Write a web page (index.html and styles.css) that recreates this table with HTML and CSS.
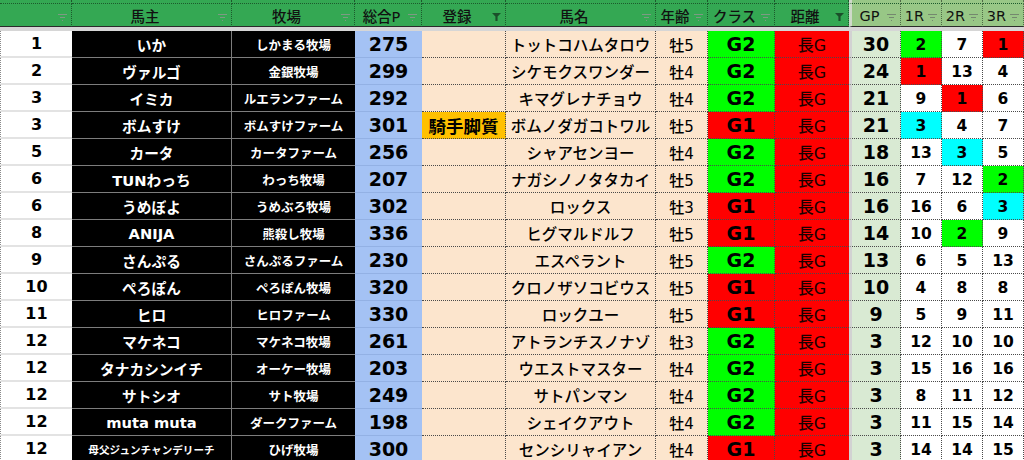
FILE: index.html
```html
<!DOCTYPE html>
<html lang="ja">
<head>
<meta charset="utf-8">
<title>順位表</title>
<link rel="stylesheet" href="styles.css">
</head>
<body>
<div class="sheet">
  <div class="row top">
    <div class="h"></div><div class="h"></div><div class="h"></div><div class="h"></div><div class="h"></div><div class="h"></div><div class="h"></div><div class="h"></div><div class="h"></div>
    <div class="h rt gpc"></div><div class="h rt"></div><div class="h rt"></div><div class="h rt"></div>
  </div>
  <div class="row head">
    <div class="h"><span class="ht"></span><span class="fi"></span></div>
    <div class="h"><span class="ht">馬主</span><span class="fi"></span></div>
    <div class="h"><span class="ht">牧場</span><span class="fi"></span></div>
    <div class="h"><span class="ht">総合P</span><span class="fi"></span></div>
    <div class="h"><span class="ht">登録</span><span class="fa"></span></div>
    <div class="h"><span class="ht">馬名</span><span class="fi"></span></div>
    <div class="h"><span class="ht">年齢</span><span class="fi"></span></div>
    <div class="h"><span class="ht">クラス</span><span class="fi"></span></div>
    <div class="h"><span class="ht">距離</span><span class="fa"></span></div>
    <div class="h rt gpc"><span class="ht">GP</span><span class="fi"></span></div>
    <div class="h rt"><span class="ht">1R</span><span class="fi"></span></div>
    <div class="h rt"><span class="ht">2R</span><span class="fi"></span></div>
    <div class="h rt"><span class="ht">3R</span><span class="fi"></span></div>
  </div>
  <div class="band"></div>

  <div class="row"><div class="c rank">1</div><div class="c own">いか</div><div class="c farm">しかまる牧場</div><div class="c pts">275</div><div class="c reg"></div><div class="c horse">トットコハムタロウ</div><div class="c age">牡5</div><div class="c cls g2">G2</div><div class="c dist">長G</div><div class="c gp">30</div><div class="c r gr">2</div><div class="c r">7</div><div class="c r rd">1</div></div>
  <div class="row"><div class="c rank">2</div><div class="c own">ヴァルゴ</div><div class="c farm">金銀牧場</div><div class="c pts">299</div><div class="c reg"></div><div class="c horse">シケモクスワンダー</div><div class="c age">牡4</div><div class="c cls g2">G2</div><div class="c dist">長G</div><div class="c gp">24</div><div class="c r rd">1</div><div class="c r">13</div><div class="c r">4</div></div>
  <div class="row"><div class="c rank">3</div><div class="c own">イミカ</div><div class="c farm">ルエランファーム</div><div class="c pts">292</div><div class="c reg"></div><div class="c horse">キマグレナチョウ</div><div class="c age">牡4</div><div class="c cls g2">G2</div><div class="c dist">長G</div><div class="c gp">21</div><div class="c r">9</div><div class="c r rd">1</div><div class="c r">6</div></div>
  <div class="row"><div class="c rank">3</div><div class="c own">ボムすけ</div><div class="c farm">ボムすけファーム</div><div class="c pts">301</div><div class="c reg jk">騎手脚質</div><div class="c horse">ボムノダガコトワル</div><div class="c age">牡5</div><div class="c cls g1">G1</div><div class="c dist">長G</div><div class="c gp">21</div><div class="c r cy">3</div><div class="c r">4</div><div class="c r">7</div></div>
  <div class="row"><div class="c rank">5</div><div class="c own">カータ</div><div class="c farm">カータファーム</div><div class="c pts">256</div><div class="c reg"></div><div class="c horse">シャアセンヨー</div><div class="c age">牡4</div><div class="c cls g2">G2</div><div class="c dist">長G</div><div class="c gp">18</div><div class="c r">13</div><div class="c r cy">3</div><div class="c r">5</div></div>
  <div class="row"><div class="c rank">6</div><div class="c own">TUNわっち</div><div class="c farm">わっち牧場</div><div class="c pts">207</div><div class="c reg"></div><div class="c horse">ナガシノノタタカイ</div><div class="c age">牡5</div><div class="c cls g2">G2</div><div class="c dist">長G</div><div class="c gp">16</div><div class="c r">7</div><div class="c r">12</div><div class="c r gr">2</div></div>
  <div class="row"><div class="c rank">6</div><div class="c own">うめぼよ</div><div class="c farm">うめぶろ牧場</div><div class="c pts">302</div><div class="c reg"></div><div class="c horse">ロックス</div><div class="c age">牡3</div><div class="c cls g1">G1</div><div class="c dist">長G</div><div class="c gp">16</div><div class="c r">16</div><div class="c r">6</div><div class="c r cy">3</div></div>
  <div class="row"><div class="c rank">8</div><div class="c own">ANIJA</div><div class="c farm">熊殺し牧場</div><div class="c pts">336</div><div class="c reg"></div><div class="c horse">ヒグマルドルフ</div><div class="c age">牡5</div><div class="c cls g1">G1</div><div class="c dist">長G</div><div class="c gp">14</div><div class="c r">10</div><div class="c r gr">2</div><div class="c r">9</div></div>
  <div class="row"><div class="c rank">9</div><div class="c own">さんぷる</div><div class="c farm">さんぷるファーム</div><div class="c pts">230</div><div class="c reg"></div><div class="c horse">エスペラント</div><div class="c age">牡5</div><div class="c cls g2">G2</div><div class="c dist">長G</div><div class="c gp">13</div><div class="c r">6</div><div class="c r">5</div><div class="c r">13</div></div>
  <div class="row"><div class="c rank">10</div><div class="c own">ぺろぽん</div><div class="c farm">ぺろぽん牧場</div><div class="c pts">320</div><div class="c reg"></div><div class="c horse">クロノザソコビウス</div><div class="c age">牡5</div><div class="c cls g1">G1</div><div class="c dist">長G</div><div class="c gp">10</div><div class="c r">4</div><div class="c r">8</div><div class="c r">8</div></div>
  <div class="row"><div class="c rank">11</div><div class="c own">ヒロ</div><div class="c farm">ヒロファーム</div><div class="c pts">330</div><div class="c reg"></div><div class="c horse">ロックユー</div><div class="c age">牡5</div><div class="c cls g1">G1</div><div class="c dist">長G</div><div class="c gp">9</div><div class="c r">5</div><div class="c r">9</div><div class="c r">11</div></div>
  <div class="row"><div class="c rank">12</div><div class="c own">マケネコ</div><div class="c farm">マケネコ牧場</div><div class="c pts">261</div><div class="c reg"></div><div class="c horse">アトランチスノナゾ</div><div class="c age">牡3</div><div class="c cls g2">G2</div><div class="c dist">長G</div><div class="c gp">3</div><div class="c r">12</div><div class="c r">10</div><div class="c r">10</div></div>
  <div class="row"><div class="c rank">12</div><div class="c own">タナカシンイチ</div><div class="c farm">オーケー牧場</div><div class="c pts">203</div><div class="c reg"></div><div class="c horse">ウエストマスター</div><div class="c age">牡4</div><div class="c cls g2">G2</div><div class="c dist">長G</div><div class="c gp">3</div><div class="c r">15</div><div class="c r">16</div><div class="c r">16</div></div>
  <div class="row"><div class="c rank">12</div><div class="c own">サトシオ</div><div class="c farm">サト牧場</div><div class="c pts">249</div><div class="c reg"></div><div class="c horse">サトパンマン</div><div class="c age">牡4</div><div class="c cls g2">G2</div><div class="c dist">長G</div><div class="c gp">3</div><div class="c r">8</div><div class="c r">11</div><div class="c r">12</div></div>
  <div class="row"><div class="c rank">12</div><div class="c own">muta muta</div><div class="c farm">ダークファーム</div><div class="c pts">198</div><div class="c reg"></div><div class="c horse">シェイクアウト</div><div class="c age">牡4</div><div class="c cls g2">G2</div><div class="c dist">長G</div><div class="c gp">3</div><div class="c r">11</div><div class="c r">15</div><div class="c r">14</div></div>
  <div class="row"><div class="c rank">12</div><div class="c own small">母父ジュンチャンデリーチ</div><div class="c farm">ひげ牧場</div><div class="c pts">300</div><div class="c reg"></div><div class="c horse">センシリャイアン</div><div class="c age">牡4</div><div class="c cls g1">G1</div><div class="c dist">長G</div><div class="c gp">3</div><div class="c r">14</div><div class="c r">14</div><div class="c r">15</div></div>
</div>
</body>
</html>
```

FILE: styles.css
```css
html, body {
  margin: 0;
  padding: 0;
  background: #ffffff;
}

body {
  width: 1024px;
  height: 460px;
  overflow: hidden;
}

.sheet {
  font-family: "DejaVu Sans", "Noto Sans CJK JP", sans-serif;
  color: #000;
  width: 1024px;
}

.row {
  display: grid;
  grid-template-columns: 72px 160px 123px 67px 84px 150px 52px 67px 74px 52px 41px 41px 41px;
  height: 27px;
}

.row.top {
  height: 4px;
}

.row.head {
  height: 23px;
}

/* header cells */
.h {
  box-sizing: border-box;
  background: #34a853;
  border-right: 1px dotted #1c5a2c;
  border-bottom: 1px dotted #1c5a2c;
  display: flex;
  align-items: center;
  min-width: 0;
}

.head .h {
  border-bottom: 1px solid #2b2b2b;
}

.h.rt {
  background: #98c786;
  border-right-color: #4f6b46;
}

.h.gpc {
  border-left: 3px solid #cfd9ca;
}

.ht {
  flex: 1;
  text-align: center;
  font-size: 14.5px;
  font-weight: 500;
  color: #111;
  white-space: nowrap;
  padding-top: 1px;
}

/* inactive filter icon */
.fi {
  flex: none;
  width: 9px;
  height: 7px;
  margin: 4px 4px 0 0;
  background:
    linear-gradient(#7d9a83, #7d9a83) center top / 9px 1px no-repeat,
    linear-gradient(#7d9a83, #7d9a83) center 3px / 5px 1px no-repeat,
    linear-gradient(#7d9a83, #7d9a83) center 6px / 1px 1px no-repeat;
}

.rt .fi {
  background:
    linear-gradient(#74886e, #74886e) center top / 9px 1px no-repeat,
    linear-gradient(#74886e, #74886e) center 3px / 5px 1px no-repeat,
    linear-gradient(#74886e, #74886e) center 6px / 1px 1px no-repeat;
}

/* active filter icon */
.fa {
  flex: none;
  width: 9px;
  height: 8px;
  margin: 4px 4px 0 0;
  background: #1b4f2a;
  clip-path: polygon(0 0, 100% 0, 62% 45%, 62% 100%, 38% 100%, 38% 45%);
}

.band {
  height: 4px;
  background: #d6d6d6;
}

/* body cells */
.c {
  box-sizing: border-box;
  display: flex;
  align-items: center;
  justify-content: center;
  white-space: nowrap;
  overflow: hidden;
  border-right: 1px dotted #4a4a4a;
  border-bottom: 1px dotted #4a4a4a;
  min-width: 0;
}

.rank {
  background: #fff;
  border-left: 1px dotted #8a8a8a;
  border-right: none;
  border-bottom: 2px solid #e3e3e3;
  font-size: 16px;
  font-weight: bold;
}

.own,
.farm {
  background: #000;
  color: #fff;
  font-weight: bold;
  border-right: 1px solid #7d7d7d;
  border-bottom: 1px solid #7d7d7d;
}

.own {
  font-size: 14.7px;
}

.own.small {
  font-size: 10.6px;
}

.farm {
  font-size: 12.5px;
  border-right: none;
}

.pts {
  background: #a4c2f4;
  border-right: none;
  border-bottom: 1px solid #93b1e4;
  font-size: 19px;
  font-weight: bold;
}

.reg,
.horse,
.age {
  background: #fce5cd;
}

.jk {
  background: #ffc000;
  font-size: 17.5px;
  font-weight: bold;
}

.horse {
  font-size: 15.5px;
  font-weight: 500;
}

.age {
  font-size: 15px;
  font-weight: 500;
}

.cls {
  font-size: 19px;
  font-weight: bold;
}

.g1 {
  background: #ff0000;
}

.g2 {
  background: #00ff00;
}

.dist {
  background: #ff0000;
  color: #1a0000;
  font-size: 16px;
  font-weight: 500;
  border-right: none;
}

.gp {
  background: #d9ead3;
  border-left: 3px solid #d2d2d2;
  font-size: 19px;
  font-weight: bold;
}

.r {
  background: #fff;
  font-size: 15.5px;
  font-weight: bold;
  padding-top: 1px;
}

.r.gr {
  background: #00ff00;
}

.r.rd {
  background: #ff0000;
}

.r.cy {
  background: #00ffff;
}
```
